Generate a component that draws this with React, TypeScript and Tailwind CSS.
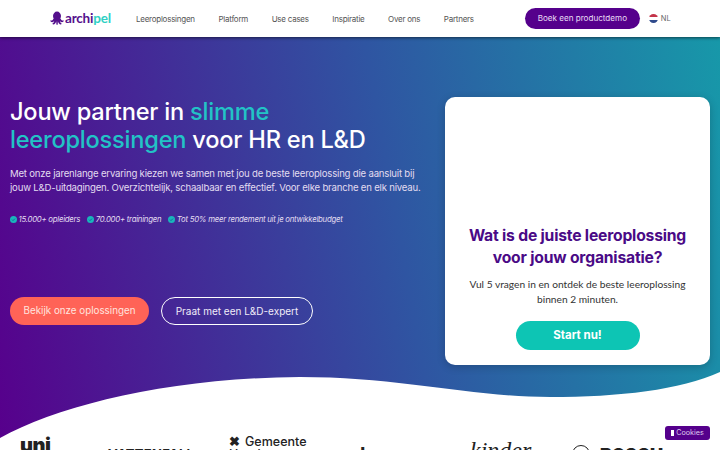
export default function App() {
  const nav = ["Leeroplossingen", "Platform", "Use cases", "Inspiratie", "Over ons", "Partners"];
  const checks = ["15.000+ opleiders", "70.000+ trainingen", "Tot 50% meer rendement uit je ontwikkelbudget"];
  return (
    <div className="relative h-[450px] w-[720px] overflow-hidden bg-white font-['Inter',sans-serif]">
      <header className="relative z-10 flex h-[37px] items-center bg-white pl-[50px] shadow-[0_1px_3px_rgba(0,0,0,0.55)]">
        <div className="flex w-[86px] items-center">
          <svg width="14" height="15" viewBox="0 0 14 15" className="mr-[1px] shrink-0 text-[#54108c]" fill="currentColor">
            <ellipse cx="7" cy="5" rx="4" ry="4.4" />
            <path d="M3.5 7.5C2.8 9.5 1.6 10 .6 9.2c-.6.9.2 2 1.5 2 1.2 0 1.7-.7 2.2-1.4-.4 1.4-1 2.6-2 3 .5 1 2 .8 2.8-.2.6-.8.9-1.6 1.1-2.4l.2 3.1c.3.8 1.1.8 1.3 0l.2-3.1c.2.8.5 1.6 1.1 2.4.8 1 2.3 1.2 2.8.2-1-.4-1.6-1.6-2-3 .5.7 1 1.4 2.2 1.4 1.3 0 2.1-1.1 1.5-2-1 .8-2.2.3-2.9-1.7z" />
          </svg>
          <span className="font-['Lato',sans-serif] text-[13.5px] font-bold leading-none tracking-[-0.2px] text-[#54108c]">
            archi<span className="text-[#2fd0c4]">pel</span>
          </span>
        </div>
        <nav className="flex gap-[23.6px] text-[8px] tracking-[-0.25px] text-[#555]">
          {nav.map((n) => (
            <span key={n}>{n}</span>
          ))}
        </nav>
        <button className="ml-[51px] flex h-[21px] w-[115px] items-center justify-center rounded-full bg-[#55008c] text-[8.1px] text-[#e9dcf5]">
          Boek een productdemo
        </button>
        <div className="ml-[9px] flex items-center gap-[3px]">
          <span className="flex h-[9px] w-[9px] flex-col overflow-hidden rounded-full">
            <span className="flex-1 bg-[#c4344a]" />
            <span className="flex-1 bg-white" />
            <span className="flex-1 bg-[#2f4a8c]" />
          </span>
          <span className="text-[7.5px] text-[#666]">NL</span>
        </div>
      </header>

      <section className="relative flex h-[403px] justify-between bg-[linear-gradient(80deg,#57008c_0%,#2f55a2_55%,#1798a9_100%)] pl-[10px] pr-[10px] pt-[61px]">
        <div className="flex w-[420px] flex-col">
          <h1 className="whitespace-nowrap text-[23.6px] font-medium leading-[28px] tracking-[-0.22px] text-white">
            Jouw partner in <span className="text-[#22c3c6]">slimme</span>
            <br />
            <span className="text-[#22c3c6]">leeroplossingen</span> voor HR en L&amp;D
          </h1>
          <p className="mt-[13px] whitespace-nowrap text-[9.6px] leading-[13.5px] tracking-[-0.2px] text-[#e2dcf0]">
            Met onze jarenlange ervaring kiezen we samen met jou de beste leeroplossing die aansluit bij
            <br />
            jouw L&amp;D-uitdagingen. Overzichtelijk, schaalbaar en effectief. Voor elke branche en elk niveau.
          </p>
          <ul className="mt-[19px] flex gap-[7px] whitespace-nowrap text-[7.8px] italic leading-[12px] tracking-[-0.25px] text-[#e2dcf0]">
            {checks.map((c) => (
              <li key={c} className="flex items-center gap-[1.5px]">
                <svg width="7" height="7" viewBox="0 0 7 7" className="shrink-0">
                  <circle cx="3.5" cy="3.5" r="3.5" fill="#19b5bb" />
                  <path d="M2 3.6l1 1 2-2" stroke="#1b5f98" strokeWidth="0.9" fill="none" />
                </svg>
                {c}
              </li>
            ))}
          </ul>
          <div className="mt-[72px] flex gap-[12px]">
            <button className="flex h-[28px] w-[139px] items-center justify-center rounded-full bg-[#ff6357] text-[9.8px] text-[#ffe4df]">
              Bekijk onze oplossingen
            </button>
            <button className="flex h-[28px] w-[152px] items-center justify-center rounded-full border border-white text-[10px] text-[#f0ecf8]">
              Praat met een L&amp;D-expert
            </button>
          </div>
        </div>
        <div className="mt-[-1px] flex h-[268px] w-[265px] flex-col items-center justify-end rounded-[10px] bg-white px-[10px] pb-[15px] text-center shadow-[0_2px_8px_rgba(0,0,0,0.2)]">
          <h2 className="text-[15.7px] font-bold leading-[22px] tracking-[-0.2px] text-[#4a0a86]">
            Wat is de juiste leeroplossing
            <br />
            voor jouw organisatie?
          </h2>
          <p className="mt-[8px] font-['Lato',sans-serif] text-[10.2px] leading-[15px] text-[#333]">
            Vul 5 vragen in en ontdek de beste leeroplossing
            <br />
            binnen 2 minuten.
          </p>
          <button className="mt-[14px] flex h-[29px] w-[124px] items-center justify-center rounded-full bg-[#0dc5b4] text-[11.5px] font-bold text-white">
            Start nu!
          </button>
        </div>
        <svg className="absolute bottom-0 left-0" width="720" height="70" viewBox="0 370 720 70">
          <path d="M0 438C60 405 170 378 300 377C400 377 470 397 550 397C620 397 680 390 720 372V440H0Z" fill="#fff" />
        </svg>
      </section>

      <div className="relative -mt-[5px] flex h-[15px] items-start text-[#222]">
        <span className="ml-[20px] w-[88px] text-[20px] font-black leading-[20px] tracking-[-0.5px]">uni</span>
        <span className="mt-[13px] w-[121px] text-[13px] font-bold leading-none tracking-[0.3px]">VATTENFALL</span>
        <div className="w-[131px]">
          <div className="flex items-center gap-[5px] text-[12.5px] font-medium leading-[13px]">
            <span className="text-[13px] font-black leading-none">✖</span>Gemeente
          </div>
          <div className="text-[12.5px] font-medium leading-[13px]">Haarlemmermeer</div>
        </div>
        <span className="mt-[10px] w-[110px] text-[20px] font-bold leading-none tracking-[1px]">lumo</span>
        <span className="mt-[3px] w-[102px] font-['Liberation_Serif',serif] text-[24px] italic leading-none">kinder</span>
        <span className="mt-[10px] flex items-start gap-[10px] text-[17.5px] font-black leading-none">
          <span className="h-[18px] w-[18px] shrink-0 rounded-full border border-[#222]" />
          <span className="mt-[1px]">BOSCH</span>
        </span>
      </div>

      <button className="absolute bottom-[10px] right-[10px] z-20 flex h-[14px] w-[45px] items-center justify-center gap-[2px] rounded-[3px] bg-[#55008c] text-[7.2px] text-[#dcc9ec]">
        <span className="h-[6px] w-[3px] bg-white" />
        Cookies
      </button>
    </div>
  );
}
